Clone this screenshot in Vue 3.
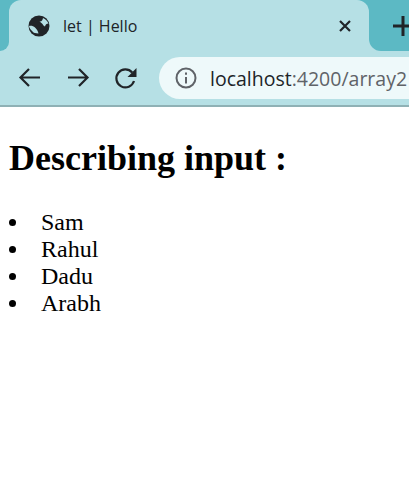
<script setup>
const names = ['Sam', 'Rahul', 'Dadu', 'Arabh']
</script>

<template>
  <div class="browser">
    <div class="tabstrip">
      <div class="edge"></div>
      <div class="tab">
        <svg class="globe" width="22" height="22" viewBox="0 0 22 22">
          <circle cx="11" cy="11" r="10.5" fill="#202428" />
          <path d="M11.500 6.500c2 .5 3-1 3.500-3.500 2.500 1 4.500 3 5.500 5.500-2 0-3 1-3.500 3-1.500-.5-2-2-3-3-.7-.8-1.500-1.300-2.500-2z" fill="#b6e0e5" />
          <path d="M1 11c2-.5 4.500 0 6 1.500 1.500 1.300 3 3.500 3.500 6-3-.2-4.500-.5-5.500-1.500-1.500-1.500-3.500-3-4-6z" fill="#b6e0e5" />
        </svg>
        <span class="title">let | Hello</span>
        <svg class="close" width="14" height="14" viewBox="0 0 14 14">
          <path d="M2 2l10 10M12 2L2 12" stroke="#202428" stroke-width="2.200" />
        </svg>
      </div>
      <div class="newtab">
        <svg width="24" height="24" viewBox="0 0 24 24">
          <path d="M12 2v20M2 12h22" stroke="#202428" stroke-width="3" />
        </svg>
      </div>
    </div>

    <div class="toolbar">
      <svg class="nav" width="24" height="24" viewBox="0 0 24 24">
        <path d="M22 11.500H3M11 3L2.500 11.500l8.500 8.500" fill="none" stroke="#202428" stroke-width="2.200" />
      </svg>
      <svg class="nav" width="24" height="24" viewBox="0 0 24 24">
        <path d="M2 11.500h19M13 3l8.500 8.500-8.500 8.500" fill="none" stroke="#202428" stroke-width="2.200" />
      </svg>
      <svg class="nav" width="24" height="24" viewBox="0 0 24 24">
        <path d="M20 15a9 9 0 1 1-1.800-8.500" fill="none" stroke="#202428" stroke-width="2.200" />
        <path d="M22.500 2v9h-9z" fill="#202428" />
      </svg>
      <div class="omnibox">
        <svg class="info" width="22" height="22" viewBox="0 0 22 22">
          <circle cx="11" cy="11" r="9.500" fill="none" stroke="#5f6368" stroke-width="2" />
          <path d="M10 10h2v6.500h-2zM10 5.500h2v2.200h-2z" fill="#5f6368" />
        </svg>
        <span class="url">localhost<span class="path">:4200/array2</span></span>
      </div>
    </div>

    <main class="content">
      <h1>Describing input :</h1>
      <ul>
        <li v-for="name in names" :key="name">{{ name }}</li>
      </ul>
    </main>
  </div>
</template>

<style>
html,
body {
  margin: 0;
  background: #fff;
  overflow: hidden;
}
</style>

<style scoped>
.browser {
  width: 409px;
  height: 496px;
  overflow: hidden;
}

.tabstrip {
  display: flex;
  height: 51px;
  background: linear-gradient(#5cb9c4 50%, #b6e0e5 50%);
}

.edge {
  flex-shrink: 0;
  width: 9px;
  background: #5cb9c4;
  border-bottom-right-radius: 12px;
}

.tab {
  flex-shrink: 0;
  width: 360px;
  display: flex;
  align-items: center;
  padding-left: 19px;
  box-sizing: border-box;
  background: #b6e0e5;
  border-radius: 12px 12px 0 0;
}

.globe {
  flex-shrink: 0;
}

.title {
  margin-left: 13px;
  flex: 1;
  font: 16px "Open Sans", sans-serif;
  color: #202428;
}

.close {
  margin-right: 17px;
}

.newtab {
  flex: 1;
  min-width: 0;
  display: flex;
  align-items: center;
  padding-left: 22px;
  background: #5cb9c4;
  border-bottom-left-radius: 12px;
}

.newtab svg {
  flex-shrink: 0;
}

.toolbar {
  display: flex;
  align-items: center;
  height: 54px;
  padding-left: 18px;
  background: #b6e0e5;
  border-bottom: 2px solid #8fb1b5;
}

.nav {
  flex-shrink: 0;
  margin-right: 24px;
}

.omnibox {
  display: flex;
  align-items: center;
  flex-shrink: 0;
  width: 300px;
  height: 42px;
  margin-left: -3px;
  padding-left: 16px;
  box-sizing: border-box;
  background: #eef9fa;
  border-radius: 21px 0 0 21px;
}

.info {
  flex-shrink: 0;
}

.url {
  margin-left: 13px;
  font: 19.500px "Open Sans", sans-serif;
  color: #202428;
  white-space: nowrap;
}

.path {
  color: #5f6368;
}

.content {
  padding: 1px 9px;
  font-family: "Liberation Serif", serif;
  color: #000;
}

h1 {
  margin: 30px 0 31px;
  font-size: 36px;
  line-height: 40px;
  font-weight: 700;
}

ul {
  margin: 0;
  padding: 0;
  list-style: none;
}

li {
  display: flex;
  align-items: center;
  font-size: 24px;
  line-height: 27px;
}

li::before {
  content: "";
  width: 7px;
  height: 7px;
  margin-right: 25px;
  border-radius: 50%;
  background: #000;
  flex-shrink: 0;
}
</style>
